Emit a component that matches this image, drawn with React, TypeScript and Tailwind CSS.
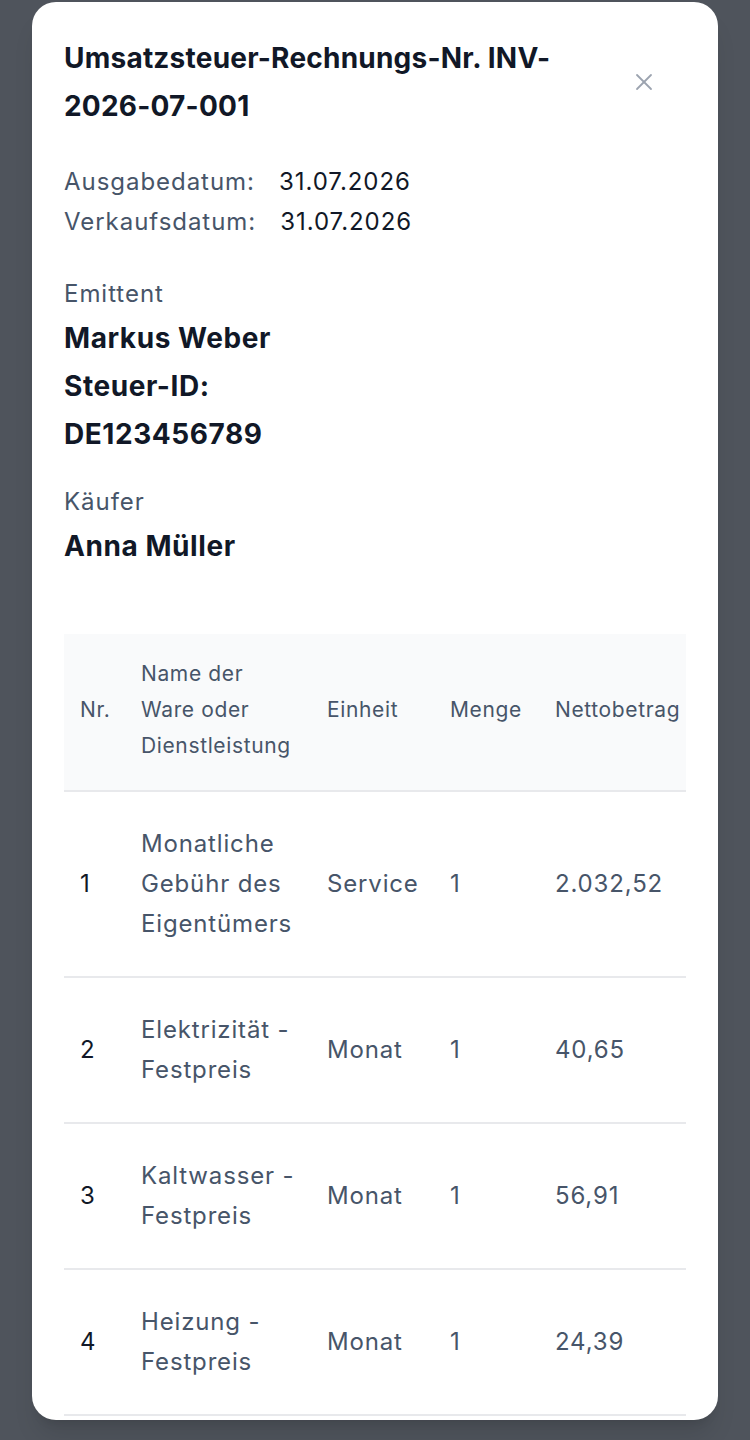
import React from "react";

const rows = [
  { nr: "1", name: "Monatliche Gebühr des Eigentümers", unit: "Service", qty: "1", net: "2.032,52", vat: "19%", gross: "2.418,70" },
  { nr: "2", name: "Elektrizität - Festpreis", unit: "Monat", qty: "1", net: "40,65", vat: "19%", gross: "48,37" },
  { nr: "3", name: "Kaltwasser - Festpreis", unit: "Monat", qty: "1", net: "56,91", vat: "19%", gross: "67,72" },
  { nr: "4", name: "Heizung - Festpreis", unit: "Monat", qty: "1", net: "24,39", vat: "19%", gross: "29,02" },
  { nr: "5", name: "Internet - Festpreis", unit: "Monat", qty: "1", net: "33,61", vat: "19%", gross: "40,00" },
];

export default function App() {
  return (
    <div
      className="min-h-[1440px] w-full bg-[#4f545c] pt-[2px]"
      style={{ fontFamily: "Inter, 'Open Sans', sans-serif" }}
    >
      <div className="mx-8 h-[1418px] overflow-hidden rounded-[24px] bg-white px-8 pt-8 shadow-xl">
        <div className="flex items-center gap-4">
          <h2 className="flex-1 text-[28px] font-bold leading-[48px] tracking-[0.008em] text-[#111827]">
            Umsatzsteuer-Rechnungs-Nr. INV-2026-07-001
          </h2>
          <button className="mr-[18px] flex h-12 w-12 items-center justify-center text-[#9ca3af]">
            <svg width="18" height="18" viewBox="0 0 18 18" fill="none" stroke="currentColor" strokeWidth="1.8" strokeLinecap="round">
              <line x1="2" y1="2" x2="16" y2="16" />
              <line x1="16" y1="2" x2="2" y2="16" />
            </svg>
          </button>
        </div>

        <div className="mt-8 text-[24px] leading-[40px] tracking-[0.04em]">
          <div className="flex gap-6">
            <span className="text-[#475569]">Ausgabedatum:</span>
            <span className="text-[#111827]">31.07.2026</span>
          </div>
          <div className="flex gap-6">
            <span className="text-[#475569]">Verkaufsdatum:</span>
            <span className="text-[#111827]">31.07.2026</span>
          </div>
        </div>

        <div className="mt-8">
          <div className="text-[24px] leading-[40px] tracking-[0.04em] text-[#475569]">Emittent</div>
          <div className="text-[28px] font-bold leading-[48px] tracking-[0.02em] text-[#111827]">
            <div>Markus Weber</div>
            <div>Steuer-ID:</div>
            <div>DE123456789</div>
          </div>
        </div>

        <div className="mt-6">
          <div className="text-[24px] leading-[40px] tracking-[0.04em] text-[#475569]">Käufer</div>
          <div className="text-[28px] font-bold leading-[48px] tracking-[0.02em] text-[#111827]">Anna Müller</div>
        </div>

        <div className="mt-16 overflow-hidden">
          <table className="w-[960px] table-fixed border-collapse text-left">
            <colgroup>
              <col className="w-[61px]" />
              <col className="w-[186px]" />
              <col className="w-[123px]" />
              <col className="w-[105px]" />
              <col className="w-[170px]" />
              <col className="w-[150px]" />
              <col className="w-[165px]" />
            </colgroup>
            <thead>
              <tr className="border-b-2 border-[#e8e9ec] bg-[#f9fafb] text-[21px] leading-[36px] tracking-[0.03em] text-[#475569]">
                <th className="px-4 pb-[26px] pt-[22px] align-middle font-normal">Nr.</th>
                <th className="px-4 pb-[26px] pt-[22px] align-middle font-normal">Name der Ware oder Dienstleistung</th>
                <th className="px-4 pb-[26px] pt-[22px] align-middle font-normal">Einheit</th>
                <th className="px-4 pb-[26px] pt-[22px] align-middle font-normal">Menge</th>
                <th className="whitespace-nowrap px-4 pb-[26px] pt-[22px] align-middle font-normal">Nettobetrag</th>
                <th className="whitespace-nowrap px-4 pb-[26px] pt-[22px] align-middle font-normal">MwSt.-Satz</th>
                <th className="whitespace-nowrap px-4 pb-[26px] pt-[22px] align-middle font-normal">Bruttobetrag</th>
              </tr>
            </thead>
            <tbody>
              {rows.map((r) => (
                <tr key={r.nr} className="border-b-2 border-[#e8e9ec] text-[24px] leading-[40px] tracking-[0.035em] text-[#475569]">
                  <td className="px-4 py-8 align-middle text-[#111827]">{r.nr}</td>
                  <td className="px-4 py-8 align-middle">{r.name}</td>
                  <td className="px-4 py-8 align-middle">{r.unit}</td>
                  <td className="px-4 py-8 align-middle">{r.qty}</td>
                  <td className="px-4 py-8 align-middle">{r.net}</td>
                  <td className="px-4 py-8 align-middle">{r.vat}</td>
                  <td className="px-4 py-8 align-middle">{r.gross}</td>
                </tr>
              ))}
            </tbody>
          </table>
        </div>
      </div>
    </div>
  );
}
